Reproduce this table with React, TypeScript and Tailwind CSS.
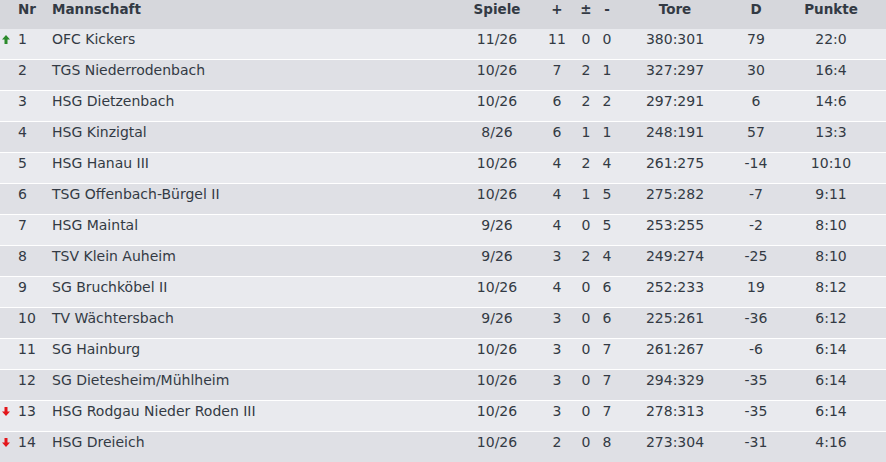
import React from "react";

type Row = { nr: number; team: string; sp: string; w: number; d: number; l: number; tore: string; diff: number; pts: string; trend?: "up" | "down" };

const rows: Row[] = [
  { nr: 1, team: "OFC Kickers", sp: "11/26", w: 11, d: 0, l: 0, tore: "380:301", diff: 79, pts: "22:0", trend: "up" },
  { nr: 2, team: "TGS Niederrodenbach", sp: "10/26", w: 7, d: 2, l: 1, tore: "327:297", diff: 30, pts: "16:4" },
  { nr: 3, team: "HSG Dietzenbach", sp: "10/26", w: 6, d: 2, l: 2, tore: "297:291", diff: 6, pts: "14:6" },
  { nr: 4, team: "HSG Kinzigtal", sp: "8/26", w: 6, d: 1, l: 1, tore: "248:191", diff: 57, pts: "13:3" },
  { nr: 5, team: "HSG Hanau III", sp: "10/26", w: 4, d: 2, l: 4, tore: "261:275", diff: -14, pts: "10:10" },
  { nr: 6, team: "TSG Offenbach-Bürgel II", sp: "10/26", w: 4, d: 1, l: 5, tore: "275:282", diff: -7, pts: "9:11" },
  { nr: 7, team: "HSG Maintal", sp: "9/26", w: 4, d: 0, l: 5, tore: "253:255", diff: -2, pts: "8:10" },
  { nr: 8, team: "TSV Klein Auheim", sp: "9/26", w: 3, d: 2, l: 4, tore: "249:274", diff: -25, pts: "8:10" },
  { nr: 9, team: "SG Bruchköbel II", sp: "10/26", w: 4, d: 0, l: 6, tore: "252:233", diff: 19, pts: "8:12" },
  { nr: 10, team: "TV Wächtersbach", sp: "9/26", w: 3, d: 0, l: 6, tore: "225:261", diff: -36, pts: "6:12" },
  { nr: 11, team: "SG Hainburg", sp: "10/26", w: 3, d: 0, l: 7, tore: "261:267", diff: -6, pts: "6:14" },
  { nr: 12, team: "SG Dietesheim/Mühlheim", sp: "10/26", w: 3, d: 0, l: 7, tore: "294:329", diff: -35, pts: "6:14" },
  { nr: 13, team: "HSG Rodgau Nieder Roden III", sp: "10/26", w: 3, d: 0, l: 7, tore: "278:313", diff: -35, pts: "6:14", trend: "down" },
  { nr: 14, team: "HSG Dreieich", sp: "10/26", w: 2, d: 0, l: 8, tore: "273:304", diff: -31, pts: "4:16", trend: "down" },
];

const cols = "grid grid-cols-[18px_34px_405px_80px_40px_18px_24px_112px_50px_100px_5px]";

function Up() {
  return (
    <svg width="8" height="9" viewBox="0 0 8 9">
      <path d="M4 0 L8 4.5 L5.5 4.5 L5.5 9 L2.5 9 L2.5 4.5 L0 4.5 Z" fill="#2b8a2b" />
    </svg>
  );
}
function Down() {
  return (
    <svg width="8" height="9" viewBox="0 0 8 9">
      <path d="M4 9 L8 4.5 L5.5 4.5 L5.5 0 L2.5 0 L2.5 4.5 L0 4.5 Z" fill="#e3161b" />
    </svg>
  );
}

export default function App() {
  return (
    <div
      className="w-[886px] h-[462px] overflow-hidden bg-white text-[14px] leading-[16px] text-[#333a44]"
      style={{ fontFamily: '"DejaVu Sans", Verdana, sans-serif' }}
    >
      <div className={`${cols} h-[29px] bg-[#d6d7dc] font-bold text-[13.5px] pt-[1px]`}>
        <div />
        <div>Nr</div>
        <div>Mannschaft</div>
        <div className="text-center">Spiele</div>
        <div className="text-center">+</div>
        <div className="text-center">±</div>
        <div className="text-center">-</div>
        <div className="text-center">Tore</div>
        <div className="text-center">D</div>
        <div className="text-center">Punkte</div>
        <div />
      </div>
      {rows.map((r, i) => (
        <div
          key={r.nr}
          className={`${cols} h-[31px] border-b border-white pt-[2px] ${i % 2 === 0 ? "bg-[#e9eaee]" : "bg-[#dfe0e5]"}`}
        >
          <div className="flex items-start pl-[2px] pt-[4px]">
            {r.trend === "up" ? <Up /> : r.trend === "down" ? <Down /> : null}
          </div>
          <div>{r.nr}</div>
          <div>{r.team}</div>
          <div className="text-center">{r.sp}</div>
          <div className="text-center">{r.w}</div>
          <div className="text-center">{r.d}</div>
          <div className="text-center">{r.l}</div>
          <div className="text-center">{r.tore}</div>
          <div className="text-center">{r.diff}</div>
          <div className="text-center">{r.pts}</div>
          <div />
        </div>
      ))}
    </div>
  );
}
